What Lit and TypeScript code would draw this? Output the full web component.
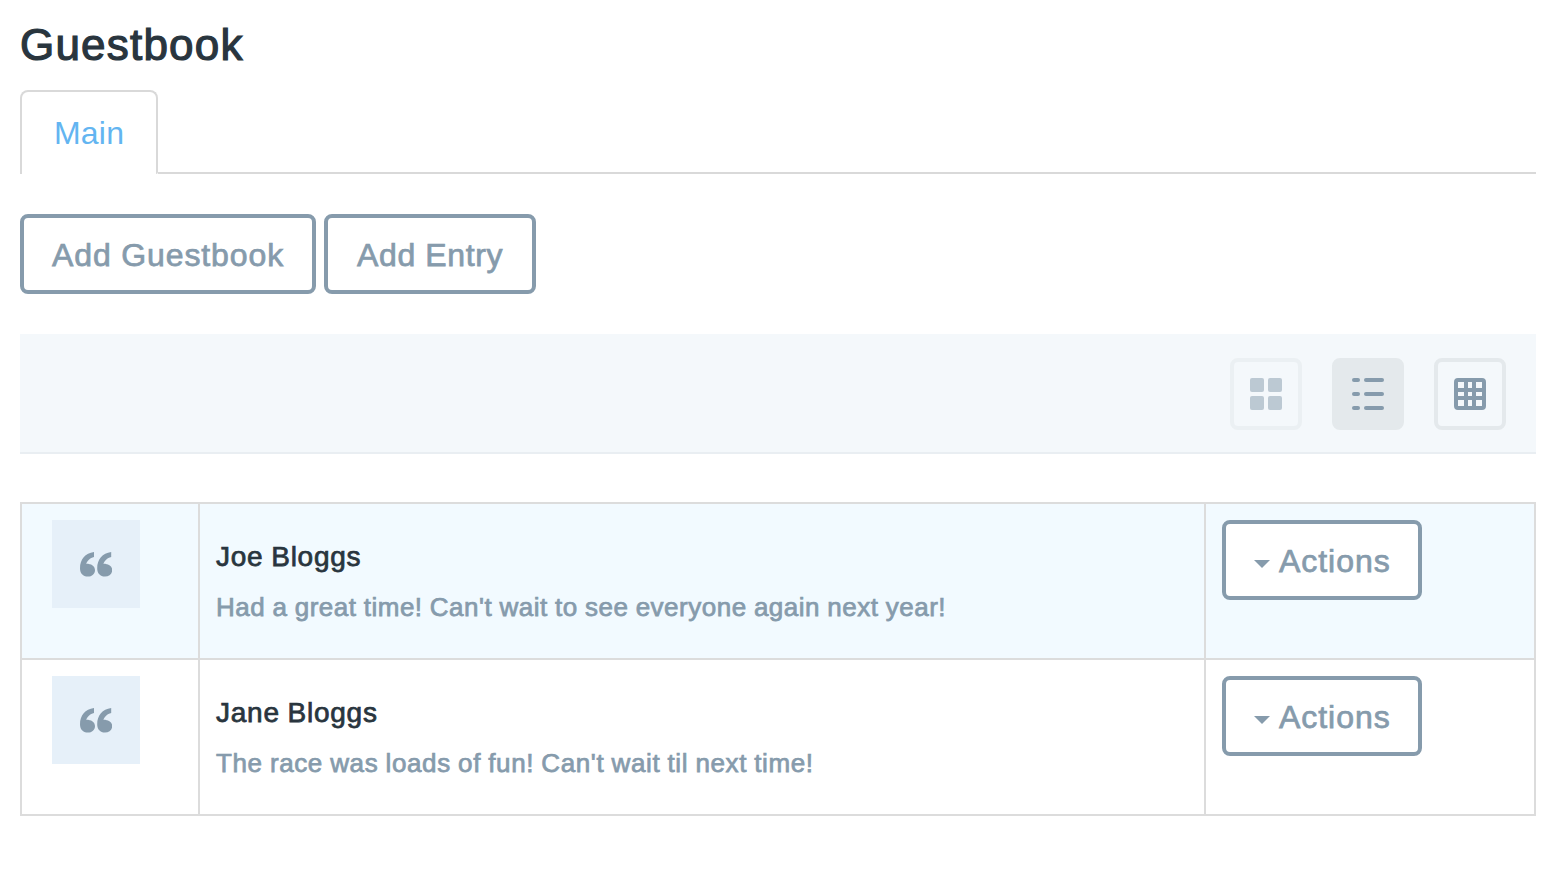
import { LitElement, html, css, svg } from "lit";
import { customElement, property } from "lit/decorators.js";

const quoteMark = svg`<path d="M14 0V5.1C10 6.2 7 8.8 6.3 12.1C7 11.9 7.8 11.8 8.6 11.9C12.3 12.2 15 14.7 15 18C15 22 12 24.6 7.8 24.6C3 24.6 0 21.3 0 16.2C0 7.6 5.2 1 14 0Z"/>`;

@customElement("entry-row")
class EntryRow extends LitElement {
  @property() name = "";
  @property() message = "";

  static styles = css`
    :host {
      display: grid;
      grid-template-columns: 176px 1fr 328px;
      column-gap: 2px;
      height: 154px;
      background: #dcdcdc;
    }
    .cell { background: #fff; padding: 16px; box-sizing: border-box; min-width: 0; }
    :host([active]) .cell { background: #f2faff; }
    .media { padding-left: 30px; }
    .thumb {
      width: 88px;
      height: 88px;
      display: flex;
      align-items: center;
      justify-content: center;
      background: #e6f0f9;
      color: #869bac;
    }
    .thumb svg { display: block; }
    .text { padding-top: 36px; white-space: nowrap; }
    .name {
      font-size: 28px;
      line-height: 34px;
      letter-spacing: 0.75px;
      word-spacing: -0.7px;
      color: #29353e;
      -webkit-text-stroke: 0.75px #29353e;
    }
    .message {
      margin-top: 16px;
      font-size: 26px;
      line-height: 34px;
      letter-spacing: 0.6px;
      word-spacing: -0.5px;
      color: #869bac;
      -webkit-text-stroke: 0.75px #869bac;
    }
    :host([active]) .message { letter-spacing: 0.51px; }
    .actions {
      box-sizing: border-box;
      width: 200px;
      height: 80px;
      padding: 2px 0 0 28px;
      display: flex;
      align-items: center;
      border: 4px solid #869bac;
      border-radius: 8px;
      background: #fff;
      color: #869bac;
      font: 32px "Liberation Sans", Arial, sans-serif;
      letter-spacing: 0.95px;
      -webkit-text-stroke: 0.75px #869bac;
    }
    .caret {
      margin: 5px 9px 0 0;
      border: 8px solid transparent;
      border-top-color: #869bac;
      border-bottom: 0;
    }
  `;

  render() {
    return html`
      <div class="cell media">
        <div class="thumb">
          <svg width="32" height="25" viewBox="0 0 32 25" fill="currentColor">
            ${quoteMark}
            <g transform="translate(17.2 0)">${quoteMark}</g>
          </svg>
        </div>
      </div>
      <div class="cell text">
        <div class="name">${this.name}</div>
        <div class="message">${this.message}</div>
      </div>
      <div class="cell">
        <button class="actions"><span class="caret"></span>Actions</button>
      </div>
    `;
  }
}

@customElement("app-root")
class AppRoot extends LitElement {
  static styles = css`
    :host {
      display: block;
      box-sizing: border-box;
      min-height: 874px;
      padding: 18px 18px 0 20px;
      background: #fff;
      font-family: "Liberation Sans", Arial, sans-serif;
    }
    .title {
      margin: 0;
      height: 72px;
      font-size: 44px;
      line-height: 54px;
      font-weight: 400;
      letter-spacing: 1.2px;
      color: #29353e;
      -webkit-text-stroke: 1.2px #29353e;
    }
    .tabs { display: flex; height: 84px; }
    .tab {
      box-sizing: border-box;
      width: 138px;
      padding-left: 32px;
      border: 2px solid #d9d9d9;
      border-bottom: 0;
      border-radius: 8px 8px 2px 0;
      font-size: 32px;
      line-height: 82px;
      letter-spacing: 0.2px;
      color: #63b5f1;
    }
    .rule { flex: 1; border-bottom: 2px solid #d9d9d9; }
    .buttons { display: flex; gap: 8px; margin-top: 40px; }
    .btn {
      box-sizing: border-box;
      height: 80px;
      padding: 2px 0 0 28px;
      text-align: left;
      white-space: nowrap;
      border: 4px solid #869bac;
      border-radius: 8px;
      background: #fff;
      color: #869bac;
      font: 32px "Liberation Sans", Arial, sans-serif;
      letter-spacing: 0.88px;
      -webkit-text-stroke: 0.75px #869bac;
    }
    .book { width: 296px; }
    .entry { width: 212px; padding-left: 29px; letter-spacing: 0.62px; }
    .toolbar {
      box-sizing: border-box;
      display: flex;
      justify-content: flex-end;
      gap: 30px;
      height: 120px;
      margin-top: 40px;
      padding: 24px 30px 0 0;
      background: #f4f8fb;
      border-bottom: 2px solid #e9eef2;
    }
    .view {
      box-sizing: border-box;
      width: 72px;
      height: 72px;
      padding: 0;
      display: flex;
      align-items: center;
      justify-content: center;
      border: 4px solid #e4e9ec;
      border-radius: 8px;
      background: transparent;
      color: #869bac;
    }
    .disabled { opacity: 0.5; }
    .current { background: #e4e9ec; }
    .list {
      display: grid;
      gap: 2px;
      margin-top: 48px;
      border: 2px solid #dcdcdc;
      background: #dcdcdc;
    }
  `;

  render() {
    return html`
      <h1 class="title">Guestbook</h1>
      <div class="tabs"><div class="tab">Main</div><div class="rule"></div></div>
      <div class="buttons">
        <button class="btn book">Add Guestbook</button>
        <button class="btn entry">Add Entry</button>
      </div>
      <div class="toolbar">
        <button class="view disabled" aria-label="Cards">
          <svg width="32" height="32" fill="currentColor">
            <rect width="14" height="14" rx="2"/><rect x="18" width="14" height="14" rx="2"/>
            <rect y="18" width="14" height="14" rx="2"/><rect x="18" y="18" width="14" height="14" rx="2"/>
          </svg>
        </button>
        <button class="view current" aria-label="List">
          <svg width="32" height="32" fill="currentColor">
            <rect width="8" height="4" rx="2"/><rect x="12" width="20" height="4" rx="2"/>
            <rect y="14" width="8" height="4" rx="2"/><rect x="12" y="14" width="20" height="4" rx="2"/>
            <rect y="28" width="8" height="4" rx="2"/><rect x="12" y="28" width="20" height="4" rx="2"/>
          </svg>
        </button>
        <button class="view" aria-label="Table">
          <svg width="32" height="32" fill="currentColor">
            <path fill-rule="evenodd" d="M4 0H28a4 4 0 0 1 4 4V28a4 4 0 0 1-4 4H4a4 4 0 0 1-4-4V4a4 4 0 0 1 4-4Z M4 4v6h6V4Z M14 4v6h4V4Z M22 4v6h6V4Z M4 14v4h6v-4Z M14 14v4h4v-4Z M22 14v4h6v-4Z M4 22v6h6v-6Z M14 22v6h4v-6Z M22 22v6h6v-6Z"/>
          </svg>
        </button>
      </div>
      <div class="list">
        <entry-row active name="Joe Bloggs" message="Had a great time! Can't wait to see everyone again next year!"></entry-row>
        <entry-row name="Jane Bloggs" message="The race was loads of fun! Can't wait til next time!"></entry-row>
      </div>
    `;
  }
}
